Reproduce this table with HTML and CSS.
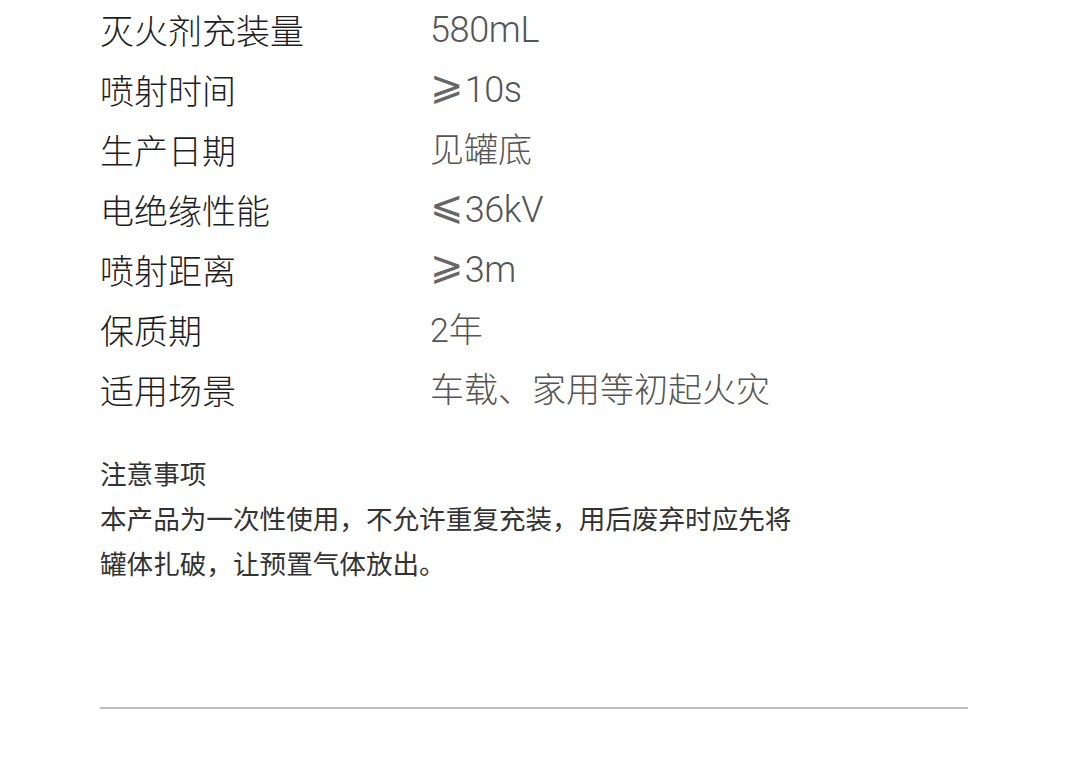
FILE: index.html
```html
<!DOCTYPE html>
<html lang="zh-CN">
<head>
  <meta charset="UTF-8" />
  <meta name="viewport" content="width=device-width,initial-scale=1.0"/>
  <title>产品参数</title>
  <link rel="stylesheet" href="styles.css">
</head>
<body>
  <div class="page">
    <div class="spec-list">
      <div class="spec-row"><span class="spec-label">灭火剂充装量</span><span class="spec-value num">580mL</span></div>
      <div class="spec-row"><span class="spec-label">喷射时间</span><span class="spec-value num"><span class="sym">⩾</span>10s</span></div>
      <div class="spec-row"><span class="spec-label">生产日期</span><span class="spec-value">见罐底</span></div>
      <div class="spec-row"><span class="spec-label">电绝缘性能</span><span class="spec-value num"><span class="sym">⩽</span>36kV</span></div>
      <div class="spec-row"><span class="spec-label">喷射距离</span><span class="spec-value num"><span class="sym">⩾</span>3m</span></div>
      <div class="spec-row"><span class="spec-label">保质期</span><span class="spec-value">2年</span></div>
      <div class="spec-row"><span class="spec-label">适用场景</span><span class="spec-value">车载、家用等初起火灾</span></div>
    </div>
    <div class="notes">
      <div class="notes-title">注意事项</div>
      <p class="notes-text">本产品为一次性使用，不允许重复充装，用后废弃时应先将<br>罐体扎破，让预置气体放出。</p>
    </div>
    <div class="divider"></div>
  </div>
</body>
</html>
```

FILE: styles.css
```css
html, body {
  margin: 0;
  background: #fff;
  font-family: "Noto Sans CJK SC", "Noto Sans", sans-serif;
  color: #333;
}
.page {
  width: 868px;
  padding: 0 0 0 100px;
}
.spec-list {
  display: flex;
  flex-direction: column;
}
.spec-row {
  display: grid;
  grid-template-columns: 330px 1fr;
  height: 60px;
  align-items: center;
  font-size: 34px;
  line-height: 60px;
}
.spec-label {
  color: #1e1e1e;
  font-weight: 300;
}
.spec-value {
  color: #555;
  font-family: Roboto, "Noto Sans CJK SC", sans-serif;
  font-weight: 300;
}
.spec-value.num {
  font-size: 36px;
  letter-spacing: -0.01em;
}
.sym {
  font-family: "DejaVu Sans", sans-serif;
  font-weight: 200;
  font-size: 40px;
  line-height: 0;
  vertical-align: 3px;
  margin-right: 1px;
  color: #666;
}
.notes {
  margin-top: 30px;
  font-size: 26.6px;
  line-height: 45px;
  color: #333;
}
.notes-title {
  height: 45px;
}
.notes-text {
  margin: 0;
}
.divider {
  margin-top: 122px;
  height: 2px;
  background: #bdbdbd;
}
```
